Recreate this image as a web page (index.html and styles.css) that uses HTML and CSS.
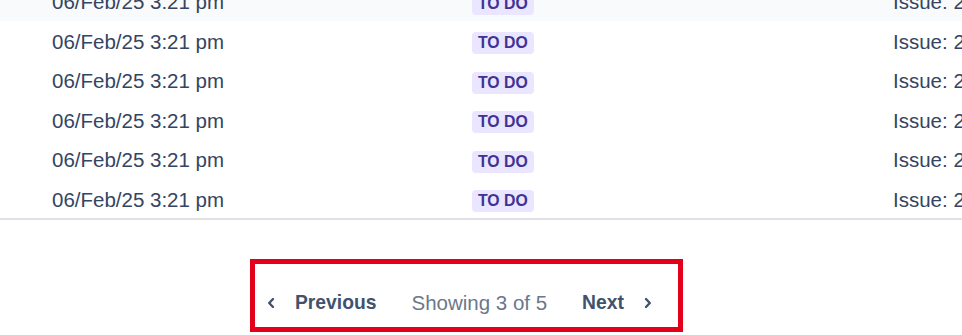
FILE: index.html
```html
<!DOCTYPE html>
<html lang="en">
<head>
<meta charset="utf-8">
<title>Issues</title>
<link rel="stylesheet" href="styles.css">
</head>
<body>
<div class="table">
  <div class="row row-alt"><span class="date">06/Feb/25 3:21 pm</span><span class="status"><span class="badge">TO DO</span></span><span class="issue">Issue: 2</span></div>
  <div class="row"><span class="date">06/Feb/25 3:21 pm</span><span class="status"><span class="badge">TO DO</span></span><span class="issue">Issue: 2</span></div>
  <div class="row"><span class="date">06/Feb/25 3:21 pm</span><span class="status"><span class="badge">TO DO</span></span><span class="issue">Issue: 2</span></div>
  <div class="row"><span class="date">06/Feb/25 3:21 pm</span><span class="status"><span class="badge">TO DO</span></span><span class="issue">Issue: 2</span></div>
  <div class="row"><span class="date">06/Feb/25 3:21 pm</span><span class="status"><span class="badge">TO DO</span></span><span class="issue">Issue: 2</span></div>
  <div class="row"><span class="date">06/Feb/25 3:21 pm</span><span class="status"><span class="badge">TO DO</span></span><span class="issue">Issue: 2</span></div>
</div>
<div class="pager-wrap">
  <nav class="pager">
    <button class="pager-btn prev" type="button">
      <svg class="chev" width="8" height="12" viewBox="0 0 8 12"><path d="M6 2 L2.2 6 L6 10" fill="none" stroke="currentColor" stroke-width="2.4" stroke-linecap="round" stroke-linejoin="round"/></svg>
      <span>Previous</span>
    </button>
    <span class="pager-info">Showing 3 of 5</span>
    <button class="pager-btn next" type="button">
      <span>Next</span>
      <svg class="chev" width="8" height="12" viewBox="0 0 8 12"><path d="M2 2 L5.8 6 L2 10" fill="none" stroke="currentColor" stroke-width="2.4" stroke-linecap="round" stroke-linejoin="round"/></svg>
    </button>
  </nav>
</div>
</body>
</html>
```
FILE: styles.css
```css
html, body {
  margin: 0;
  padding: 0;
  background: #ffffff;
  overflow: hidden;
}
body {
  width: 962px;
  height: 335px;
  font-family: "Liberation Sans", Arial, sans-serif;
  font-size: 20.5px;
  color: #344563;
}
.table {
  margin-top: -19px;
  border-bottom: 2px solid #dfe1e6;
  width: 1100px;
}
.row {
  box-sizing: border-box;
  display: grid;
  grid-template-columns: 420px 421px 1fr;
  align-items: center;
  height: 39.5px;
  padding-left: 52px;
  padding-top: 2.5px;
}
.row-alt {
  background: #f9fafb;
}
.date, .issue {
  white-space: nowrap;
  line-height: 24px;
}
.badge {
  display: inline-block;
  background: #eae6ff;
  color: #403294;
  font-weight: 700;
  font-size: 15.8px;
  line-height: 22px;
  padding: 0 6px;
  border-radius: 4px;
}
.pager-wrap {
  padding-top: 39px;
  padding-left: 250px;
  display: flex;
}
.pager {
  display: flex;
  align-items: center;
  gap: 35px;
  border: 5px solid #e3001b;
  padding: 27px 26px 12px 12px;
  height: 24px;
}
.pager-btn {
  display: flex;
  align-items: center;
  gap: 20px;
  background: none;
  border: 0;
  padding: 0;
  font: inherit;
  font-weight: 700;
  font-size: 19.3px;
  color: #42526e;
  cursor: pointer;
}
.chev {
  display: block;
  color: #42526e;
}
.pager-info {
  color: #6b778c;
  font-size: 20.5px;
  white-space: nowrap;
}
```
